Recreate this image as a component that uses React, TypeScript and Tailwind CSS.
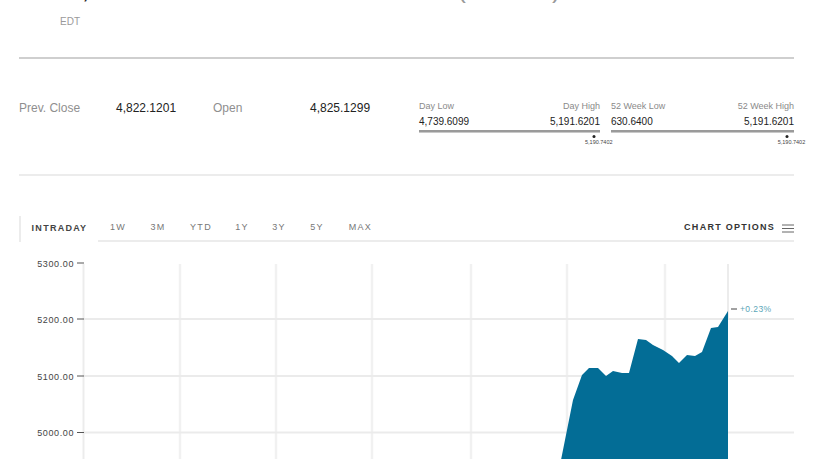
import React from 'react'

const font = { fontFamily: '"Liberation Sans", Arial, sans-serif' }

function RangeBlock({
  lowLabel,
  highLabel,
  low,
  high,
  markerClass,
}: {
  lowLabel: string
  highLabel: string
  low: string
  high: string
  markerClass: string
}) {
  return (
    <div className="flex flex-col">
      <div className="flex justify-between text-[9px] leading-[12px] text-[#8a8a8a]">
        <span>{lowLabel}</span>
        <span>{highLabel}</span>
      </div>
      <div className="mt-[4px] flex justify-between text-[10px] leading-[12px] text-[#222]">
        <span>{low}</span>
        <span>{high}</span>
      </div>
      <div className="relative mt-[2px] h-[3px] border-b border-[#c8c8c8] bg-[#9a9a9a]">
        <div className={`absolute top-[5px] ${markerClass}`}>
          <div className="h-[3px] w-[3px] -translate-x-1/2 rounded-full bg-[#222]" />
          <div className="absolute top-[4px] left-[-9px] whitespace-nowrap text-[5.5px] leading-[7px] text-[#444]">
            5,190.7402
          </div>
        </div>
      </div>
    </div>
  )
}

const tabs = [
  { label: '1W', w: 'w-[40px]' },
  { label: '3M', w: 'w-[40px]' },
  { label: 'YTD', w: 'w-[46px]' },
  { label: '1Y', w: 'w-[36px]' },
  { label: '3Y', w: 'w-[38px]' },
  { label: '5Y', w: 'w-[38px]' },
  { label: 'MAX', w: 'w-[49px]' },
]

const yLabels = [
  { v: '5300.00', y: 263 },
  { v: '5200.00', y: 319 },
  { v: '5100.00', y: 376 },
  { v: '5000.00', y: 432.5 },
]

const vLines = [180, 276, 372, 471, 567, 665]

const area =
  'M561,460 L573,400 L582,375 L589,368 L598,368 L606,376 L613,371 L622,373 L629,373 L638,339 L646,340 L653,345 L663,350 L672,356 L679,363 L687,355 L695,356 L702,352 L711,328 L718,327 L728,311 L728,460 Z'

export default function App() {
  return (
    <div className="h-[459px] w-[816px] overflow-hidden bg-white" style={font}>
      {/* headline above, scrolled out of view */}
      <div className="h-[5px] overflow-hidden">
        <div className="-mt-[25px] flex text-[26px] leading-[28px]">
          <span className="ml-[82px] text-[#222]">,</span>
          <span className="ml-[368px] text-[#999]">(</span>
          <span className="ml-[86px] text-[#999]">)</span>
        </div>
      </div>

      <div className="mt-[11px] pl-[60px] text-[10px] leading-[12px] text-[#9a9a9a]">EDT</div>

      <div className="ml-[19px] mt-[29px] h-[2px] w-[775px] bg-[#cfcfcf]" />

      {/* stats */}
      <div className="ml-[19px] flex h-[115px] w-[775px] pt-[41px]">
        <div className="mt-[2px] flex text-[12px] leading-[12px]">
          <span className="w-[97px] text-[#8f8f8f]">Prev. Close</span>
          <span className="w-[97px] text-[#222]">4,822.1201</span>
          <span className="w-[97px] text-[#8f8f8f]">Open</span>
          <span className="w-[109px] text-[#222]">4,825.1299</span>
        </div>
        <div className="w-[181px]">
          <RangeBlock
            lowLabel="Day Low"
            highLabel="Day High"
            low="4,739.6099"
            high="5,191.6201"
            markerClass="left-[96.7%]"
          />
        </div>
        <div className="ml-[11px] w-[183px]">
          <RangeBlock
            lowLabel="52 Week Low"
            highLabel="52 Week High"
            low="630.6400"
            high="5,191.6201"
            markerClass="left-[96%]"
          />
        </div>
      </div>

      <div className="ml-[19px] h-[2px] w-[775px] bg-[#ececec]" />

      {/* tabs */}
      <div className="ml-[19px] mt-[40px] flex h-[26px] w-[775px] text-[9px] tracking-[0.14em]">
        <div className="flex w-[79px] items-center justify-center border-l-2 border-[#ececec] font-bold text-[#444]">
          INTRADAY
        </div>
        <div className="flex flex-1 items-center border-b-2 border-[#ececec]">
          {tabs.map((t) => (
            <div key={t.label} className={`${t.w} text-center text-[#777]`}>
              {t.label}
            </div>
          ))}
          <div className="ml-auto flex items-center gap-[7px] font-bold text-[#333]">
            <span>CHART OPTIONS</span>
            <svg width="12" height="9" viewBox="0 0 12 9">
              <path d="M0 1h12M0 4.5h12M0 8h12" stroke="#666" strokeWidth="1" />
            </svg>
          </div>
        </div>
      </div>

      {/* chart */}
      <svg width="816" height="217" viewBox="0 242 816 217" className="block">
        {vLines.map((x) => (
          <line key={x} x1={x} y1={264} x2={x} y2={460} stroke="#f1f1f1" strokeWidth="2.5" />
        ))}
        <line x1={83.5} y1={264} x2={83.5} y2={460} stroke="#ececec" strokeWidth="2" />
        <line x1={728} y1={264} x2={728} y2={320} stroke="#e6e6e6" strokeWidth="1.5" />
        {yLabels.slice(1).map((l) => (
          <line key={l.v} x1={84} y1={l.y} x2={794} y2={l.y} stroke="#ebebeb" strokeWidth="2" />
        ))}
        {yLabels.map((l) => (
          <g key={l.v}>
            <text
              x={74}
              y={l.y + 3.5}
              textAnchor="end"
              fontSize="9"
              fill="#444"
              fontFamily='"Liberation Sans", Arial, sans-serif'
              letterSpacing="0.6"
            >
              {l.v}
            </text>
            <line x1={77} y1={l.y} x2={84} y2={l.y} stroke="#555" strokeWidth="1" />
          </g>
        ))}
        <path d={area} fill="#036d96" />
        <line x1={731} y1={309} x2={737} y2={309} stroke="#444" strokeWidth="1" />
        <text
          x={740}
          y={312}
          fontSize="8.5"
          fill="#5ba6b8"
          fontFamily='"Liberation Sans", Arial, sans-serif'
          letterSpacing="0.4"
        >
          +0.23%
        </text>
      </svg>
    </div>
  )
}
